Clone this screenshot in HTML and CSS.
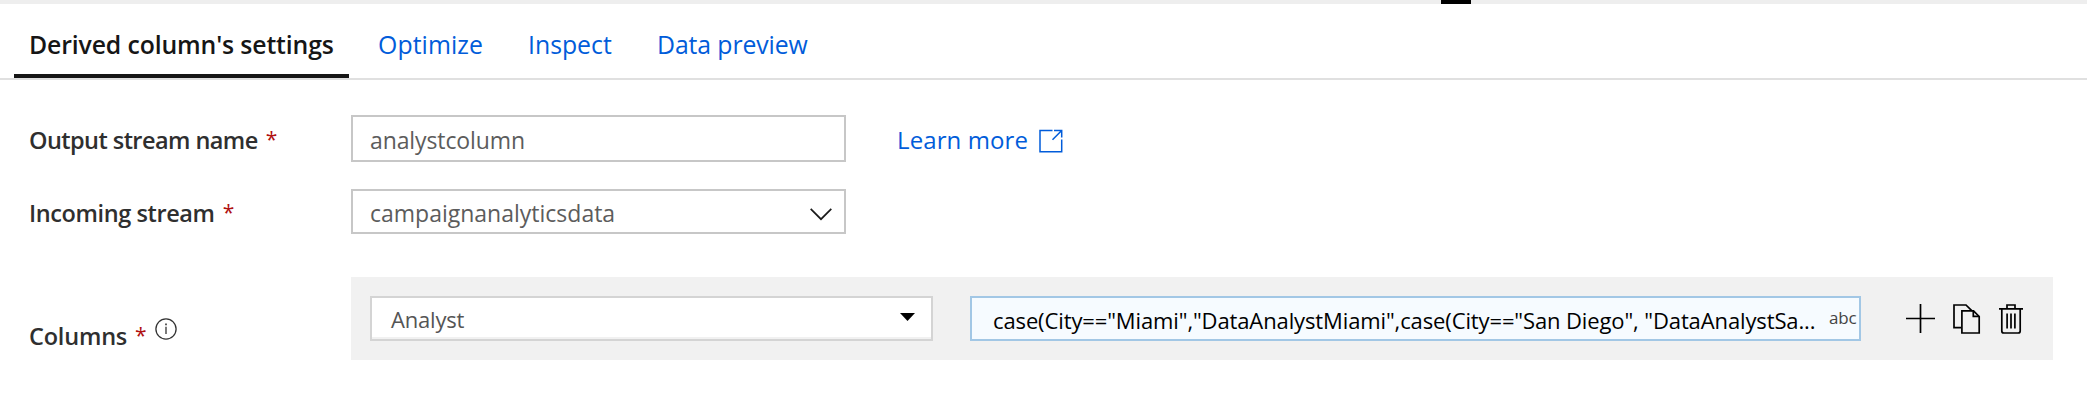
FILE: index.html
```html
<!DOCTYPE html>
<html lang="en">
<head>
<meta charset="utf-8">
<title>Derived column's settings</title>
<link rel="stylesheet" href="styles.css">
</head>
<body>
<div class="splitter"><div class="splitter-handle"></div></div>
<nav class="tabs">
  <a class="tab tab-active">Derived column's settings</a>
  <a class="tab tab-optimize">Optimize</a>
  <a class="tab tab-inspect">Inspect</a>
  <a class="tab tab-preview">Data preview</a>
</nav>
<main class="form">
  <div class="row row-output">
    <div class="label label-output">Output stream name<span class="required">*</span></div>
    <div class="field field-output"><span class="value">analystcolumn</span></div>
    <a class="learn-more"><span>Learn more</span>
      <svg class="external" width="24" height="24" viewBox="0 0 24 24" fill="none" stroke="#015cda" stroke-width="1.5">
        <path d="M13.5 1.5H1V22.7H22.7V10.5M15 1.5H22.7V8.5M22.2 2L13.5 10.7"/>
      </svg>
    </a>
  </div>
  <div class="row row-incoming">
    <div class="label label-incoming">Incoming stream<span class="required">*</span></div>
    <div class="field field-incoming"><span class="value">campaignanalyticsdata</span>
      <svg width="22" height="13" viewBox="0 0 22 13" fill="none" stroke="#1b1b1b" stroke-width="1.7"><path d="M0.7 0.9L11 11.2L21.3 0.9"/></svg>
    </div>
  </div>
  <div class="row row-columns">
    <div class="label label-columns">Columns<span class="required">*</span>
      <svg class="info" width="22" height="22" viewBox="0 0 22 22" fill="none" stroke="#333" stroke-width="1.3"><circle cx="11" cy="11" r="10.1"/><path d="M11 8.8V16"/><path d="M11 5.6V7.2" stroke-width="1.6"/></svg>
    </div>
    <div class="panel">
      <div class="select"><span class="select-value">Analyst</span>
        <svg width="15" height="8" viewBox="0 0 15 8"><path d="M0 0H15L7.5 8Z" fill="#000"/></svg>
      </div>
      <div class="expression"><span class="code">case(City=="Miami","DataAnalystMiami",case(City=="San Diego", "DataAnalystSa...</span><span class="type">abc</span></div>
      <div class="actions">
        <svg width="29" height="29" viewBox="0 0 29 29" stroke="#000" stroke-width="1.7"><path d="M14.5 0V29M0 14.5H29"/></svg>
        <svg class="copy" width="28" height="30" viewBox="0 0 28 30" fill="none" stroke="#000" stroke-width="1.7"><path d="M8 23.7H1V1H13L19 6.8"/><path d="M8.9 6.8H20.5L26.2 12.5V29H8.9Z"/><path d="M20.3 6.8V12.3H26.2"/></svg>
        <svg class="trash" width="24" height="30" viewBox="0 0 24 30" fill="none" stroke="#000" stroke-width="1.7"><path d="M0 4.9H24M8 4.9V1H16V4.9M2.8 4.9V27Q2.8 29 4.8 29H19.2Q21.2 29 21.2 27V4.9M8.1 9.5V24.5M12 9.5V24.5M15.9 9.5V24.5"/></svg>
      </div>
    </div>
  </div>
</main>
</body>
</html>
```
FILE: styles.css
```css
* { box-sizing: border-box; }
body {
  margin: 0;
  height: 406px;
  overflow: hidden;
  background: #fff;
  font-family: "Open Sans", "Noto Sans", sans-serif;
  white-space: nowrap;
}
svg { display: block; flex: none; }
.splitter { height: 4px; background: #eee; }
.splitter-handle { width: 30px; height: 4px; margin-left: 1441px; background: #000; }
.tabs {
  display: flex;
  height: 76px;
  padding-left: 14px;
  border-bottom: 2px solid #e0e0e0;
}
.tab { height: 74px; padding-top: 23px; font-size: 24.8px; line-height: 34px; color: #015cda; }
.tab-active {
  width: 335px;
  padding-left: 15px;
  border-bottom: 4px solid #161616;
  font-weight: 600;
  color: #161616;
  letter-spacing: -0.13px;
}
.tab-optimize { width: 150px; margin-left: 29px; letter-spacing: 0.1px; }
.tab-inspect { width: 129px; }
.tab-preview { letter-spacing: -0.1px; }
.form { padding: 35px 0 0 29px; }
.row { display: flex; }
.label {
  display: flex;
  width: 322px;
  font-size: 23.5px;
  line-height: 32px;
  font-weight: 600;
  color: #2f2f2f;
  letter-spacing: -0.4px;
}
.required { margin-left: 8px; font-size: 21px; line-height: 30px; font-weight: 400; color: #b01010; }
.row-output { height: 74px; }
.label-output { padding-top: 9px; letter-spacing: -0.56px; }
.field {
  display: flex;
  width: 495px;
  padding-left: 17px;
  border: 2px solid #c7c7c7;
  font-size: 23px;
  line-height: 32px;
  color: #5c5c5c;
}
.field-output { height: 47px; padding-top: 7px; letter-spacing: -0.1px; }
.field-incoming { height: 45px; padding: 6px 12px 0 17px; justify-content: space-between; }
.field-incoming svg { margin-top: 11px; }
.learn-more { display: flex; padding: 9px 0 0 51px; font-size: 24px; line-height: 32px; letter-spacing: 0.1px; color: #015cda; }
.external { margin: 5px 0 0 11px; }
.row-incoming { height: 88px; }
.label-incoming { padding-top: 8px; }
.label-columns { padding-top: 43px; letter-spacing: -0.2px; }
.info { margin: -2px 0 0 9px; }
.panel {
  display: flex;
  width: 1702px;
  height: 83px;
  padding: 19px 0 0 19px;
  background: #f1f1f1;
}
.select {
  display: flex;
  justify-content: space-between;
  width: 563px;
  height: 45px;
  padding: 6px 16px 0 19px;
  border: 2px solid #d4d4d4;
  background: #fff;
  box-shadow: inset 0 -2px #f1f1f1;
  font-size: 22px;
  line-height: 30px;
  letter-spacing: -0.2px;
  color: #555;
}
.select svg { margin-top: 9px; }
.expression {
  display: flex;
  flex: none;
  width: 891px;
  height: 45px;
  margin-left: 37px;
  padding: 7px 0 0 21px;
  border: 2px solid #a2c7e5;
  background: #f6fbff;
  font-size: 22px;
  line-height: 30px;
  letter-spacing: -0.12px;
  color: #000;
}
.code { width: 836px; }
.type { font-size: 17px; line-height: 26px; color: #444; }
.actions { display: flex; padding: 8px 0 0 45px; }
.copy { margin-left: 18px; }
.trash { margin-left: 18px; }
```
